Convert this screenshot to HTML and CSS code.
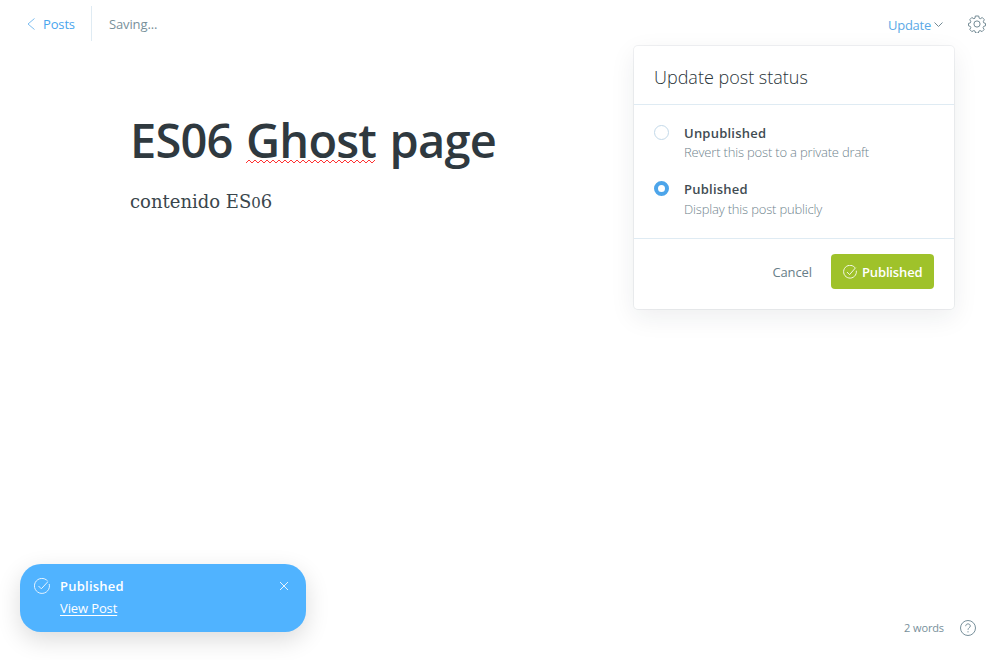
FILE: index.html
```html
<!DOCTYPE html>
<html lang="en">
<head>
<meta charset="utf-8">
<title>Editor</title>
<link rel="stylesheet" href="styles.css">
</head>
<body>
<div class="app">
  <header class="topbar">
    <a class="back"><svg width="8" height="12" viewBox="0 0 8 12"><path d="M7.500.5 1 6l6.500 5.500"/></svg><span>Posts</span></a>
    <span class="saving">Saving...</span>
    <a class="update"><span>Update</span><svg width="9" height="6" viewBox="0 0 9 6"><path d="M.5.5l4 4 4-4"/></svg></a>
    <svg class="gear" width="18" height="18" viewBox="0 0 18 18"><path d="M7.300 1h3.400l.5 2.200 1.100.5 2-1.200 2 2.200-1 2 .5 1.200 1.700.5v2.400l-1.900.6-.5 1.200 1 1.900-2 2.100-2-1-1.200.5-.5 1.900H7.600l-.6-1.900-1.200-.5-2 1-2-2.100 1-1.900-.5-1.200L.5 10.800V8.400l1.800-.5.500-1.200-1-2 2-2.200 2 1.200 1.200-.5z"/><circle cx="9" cy="9" r="3.100"/></svg>
  </header>

  <main class="editor">
    <h1>ES06 <span class="misspelled">Ghost<svg width="129" height="5" viewBox="0 0 129 5"><defs><pattern id="wave" width="6" height="5" patternUnits="userSpaceOnUse"><path d="M-1 3 0 4l3-3 3 3 1-1"/></pattern></defs><rect class="wave" width="129" height="5" fill="url(#wave)"/></svg></span> page</h1>
    <p>contenido ES<span class="oldstyle">0</span>6</p>
  </main>

  <section class="popup">
    <h2>Update post status</h2>
    <div class="options">
      <div class="option">
        <span class="radio"></span>
        <div><strong class="unpublished">Unpublished</strong><small class="revert">Revert this post to a private draft</small></div>
      </div>
      <div class="option">
        <span class="radio checked"></span>
        <div><strong>Published</strong><small>Display this post publicly</small></div>
      </div>
    </div>
    <footer class="actions">
      <span class="cancel">Cancel</span>
      <button type="button"><svg width="14" height="14" viewBox="0 0 16 16"><path d="M13.600 3A7.300 7.300 0 1 0 15.200 6.500M4.500 8l3 3 7-8"/></svg><span>Published</span></button>
    </footer>
  </section>

  <aside class="toast">
    <svg class="toast-check" width="16" height="16" viewBox="0 0 16 16"><path d="M13.700 3.100A7.500 7.500 0 1 0 15.200 6M4.500 8 7.300 10.800l6.500-7"/></svg>
    <div class="toast-text"><strong>Published</strong><a>View Post</a></div>
    <svg class="close" width="8" height="8" viewBox="0 0 8 8"><path d="M0 0l8 8M8 0 0 8"/></svg>
  </aside>

  <div class="status">
    <span>2 words</span>
    <svg width="16" height="16" viewBox="0 0 16 16"><circle cx="8" cy="8" r="7.500"/><path d="M5.700 6.200c0-1.500 1-2.300 2.300-2.300s2.300.8 2.300 2.100C10.300 7.800 8 7.700 8 9.800M8 11.200v1.200"/></svg>
  </div>
</div>
</body>
</html>
```
FILE: styles.css
```css
* { box-sizing: border-box; }
body { margin: 0; background: #fff; font-family: "Open Sans", "Noto Sans", sans-serif; font-size: 13px; color: #2e3a3f; }
svg { display: block; fill: none; stroke: currentColor; stroke-width: 1; flex: none; }
.app { position: relative; width: 1000px; height: 660px; overflow: hidden; }

.topbar { display: flex; align-items: center; height: 47px; padding: 0 14px 0 27px; }
.back { display: flex; align-items: center; gap: 8px; height: 35px; width: 65px; border-right: 1px solid #dfebf3; color: #4aa5ee; letter-spacing: -.15px; }
.back svg { color: #7cbdf0; }
.saving { margin-left: 17px; color: #78909b; letter-spacing: -.13px; }
.update { display: flex; align-items: center; gap: 3px; margin-left: auto; padding-top: 3px; color: #5ba9e6; letter-spacing: -.25px; }
.update svg { color: #738a94; }
.gear { margin-left: 25px; color: #738a94; }

.editor { padding: 60px 0 0 130px; }
h1 { margin: 0; font-size: 47px; line-height: 66px; font-weight: 600; color: #2f393f; letter-spacing: -.8px; word-spacing: 2px; white-space: nowrap; }
.misspelled { position: relative; }
.misspelled svg { position: absolute; left: 0; bottom: 8px; color: #f33; }
.wave { stroke: none; }
.editor p { margin: 15px 0 0; font: 18px/28px Georgia, "DejaVu Serif", serif; color: #3a464c; white-space: nowrap; }
.oldstyle { font-size: 15px; }

.popup { position: absolute; left: 634px; top: 46px; width: 320px; height: 263px; background: #fff; border-radius: 4px; box-shadow: 0 0 0 1px rgba(99,114,130,.09), 0 8px 26px rgba(27,39,51,.08); }
h2 { margin: 0; height: 59px; padding: 17px 20px 0; border-bottom: 1px solid #dfebf3; font-size: 18px; line-height: 29px; font-weight: 300; color: #293439; }
.options { height: 134px; padding: 18px 20px 0; border-bottom: 1px solid #dfebf3; }
.option { display: flex; gap: 15px; height: 56px; white-space: nowrap; }
.radio { width: 15px; height: 15px; margin-top: 2px; border: 1px solid #c3d9e9; border-radius: 50%; background: #fff; }
.checked { border: 4px solid #4da5ea; }
.option strong { display: block; line-height: 20px; font-weight: 600; color: #414c52; letter-spacing: .23px; }
.option small { display: block; line-height: 20px; font-size: 13px; font-weight: 300; color: #70848e; letter-spacing: -.18px; }
.option .revert { line-height: 18px; }
.actions { display: flex; align-items: center; justify-content: flex-end; gap: 19px; padding: 15px 20px 0; }
.cancel { color: #687e88; letter-spacing: -.1px; }
button { display: flex; align-items: center; gap: 5px; width: 103px; height: 35px; padding: 0 0 0 12px; border: 0; border-radius: 4px; background: #9fc22a; color: #fff; font: 600 13px "Open Sans", sans-serif; letter-spacing: -.15px; }

.toast { position: absolute; left: 20px; top: 564px; width: 286px; height: 68px; display: flex; align-items: flex-start; padding: 12px 18px 0 14px; border-radius: 21px; background: #50b3ff; color: #fff; box-shadow: 0 8px 24px rgba(0,0,0,.14); }
.toast svg { opacity: .85; }
.toast-check { margin-top: 2px; }
.toast-text { flex: 1; margin-left: 10px; }
.toast strong, .toast a { display: block; width: max-content; font-weight: 600; line-height: 20px; letter-spacing: .23px; }
.toast a { margin-top: 2px; font-weight: 400; text-decoration: underline; text-underline-offset: 2px; letter-spacing: -.12px; }
.close { margin-top: 6px; }

.status { position: absolute; right: 24px; bottom: 24px; display: flex; align-items: center; gap: 16px; color: #78909b; font-size: 11px; letter-spacing: -.12px; }
.status span { padding-bottom: 1px; }
```
